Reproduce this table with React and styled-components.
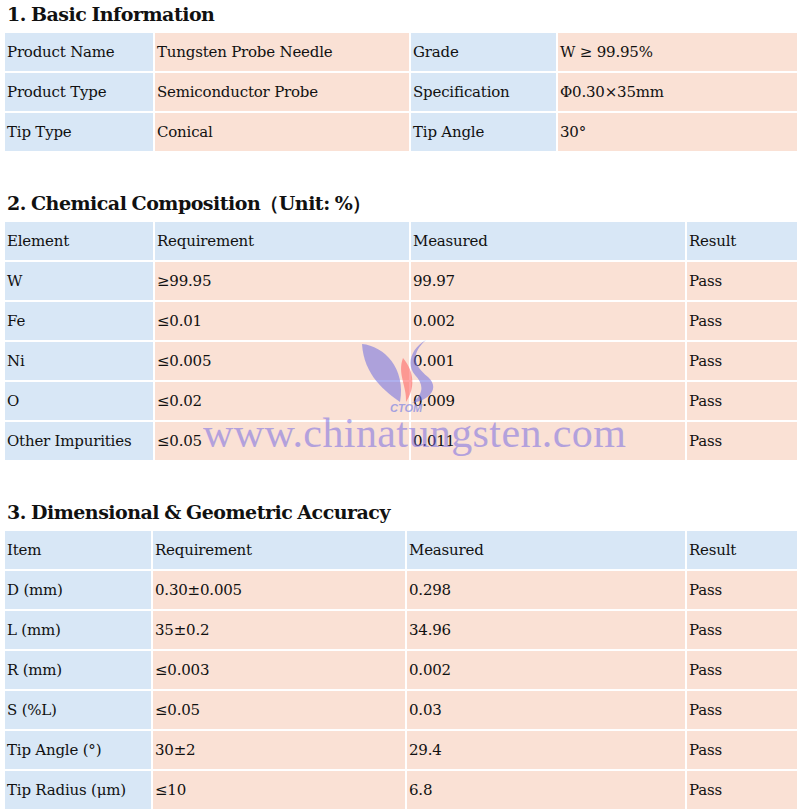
import styled, { createGlobalStyle } from "styled-components";

const GlobalStyle = createGlobalStyle`
  html, body { margin: 0; padding: 0; background: #fff; }
  body { font-family: "DejaVu Serif", "Liberation Serif", serif; color: #111; }
`;

const Page = styled.div`
  position: relative;
  width: 800px;
  padding: 0 1px 0 3px;
  box-sizing: border-box;
`;

const Heading = styled.h2`
  margin: ${(p) => (p.$first ? "0" : "36px")} 0 2px 4px;
  font-size: 19px;
  line-height: 29px;
  font-weight: bold;
  letter-spacing: -0.5px;
  word-spacing: -1px;
`;

const Table = styled.table`
  width: 796px;
  border-collapse: separate;
  border-spacing: 2px;
  table-layout: fixed;
`;

const Cell = styled.td`
  height: 38px;
  padding: 0 2px;
  box-sizing: border-box;
  font-size: 15px;
  letter-spacing: -0.2px;
  white-space: nowrap;
  vertical-align: middle;
  background: ${(p) => (p.$head ? "#d8e7f6" : "#fae1d5")};
`;

const Watermark = styled.div`
  position: absolute;
  left: 0;
  top: 0;
  width: 800px;
  height: 809px;
  pointer-events: none;
`;

const Logo = styled.svg`
  position: absolute;
  left: 356px;
  top: 334px;
`;

const Url = styled.div`
  position: absolute;
  left: 203px;
  top: 410px;
  font-family: "Liberation Serif", serif;
  font-size: 42px;
  line-height: 46px;
  color: #6f63e4;
  opacity: 0.5;
  letter-spacing: 0.4px;
`;

const basic = [
  ["Product Name", "Tungsten Probe Needle", "Grade", "W ≥ 99.95%"],
  ["Product Type", "Semiconductor Probe", "Specification", "Φ0.30×35mm"],
  ["Tip Type", "Conical", "Tip Angle", "30°"],
];

const chemical = [
  ["Element", "Requirement", "Measured", "Result"],
  ["W", "≥99.95", "99.97", "Pass"],
  ["Fe", "≤0.01", "0.002", "Pass"],
  ["Ni", "≤0.005", "0.001", "Pass"],
  ["O", "≤0.02", "0.009", "Pass"],
  ["Other Impurities", "≤0.05", "0.011", "Pass"],
];

const dimensional = [
  ["Item", "Requirement", "Measured", "Result"],
  ["D (mm)", "0.30±0.005", "0.298", "Pass"],
  ["L (mm)", "35±0.2", "34.96", "Pass"],
  ["R (mm)", "≤0.003", "0.002", "Pass"],
  ["S (%L)", "≤0.05", "0.03", "Pass"],
  ["Tip Angle (°)", "30±2", "29.4", "Pass"],
  ["Tip Radius (μm)", "≤10", "6.8", "Pass"],
];

function DataTable({ rows, widths, isHead }) {
  return (
    <Table>
      <colgroup>
        {widths.map((w, i) => (
          <col key={i} style={{ width: w }} />
        ))}
      </colgroup>
      <tbody>
        {rows.map((row, r) => (
          <tr key={r}>
            {row.map((text, c) => (
              <Cell key={c} $head={isHead(r, c)}>
                {text}
              </Cell>
            ))}
          </tr>
        ))}
      </tbody>
    </Table>
  );
}

export default function App() {
  return (
    <Page>
      <GlobalStyle />
      <Heading $first>1. Basic Information</Heading>
      <DataTable
        rows={basic}
        widths={[148, 254, 145, 239]}
        isHead={(r, c) => c === 0 || c === 2}
      />
      <Heading>2. Chemical Composition（Unit: %）</Heading>
      <DataTable
        rows={chemical}
        widths={[148, 254, 274, 110]}
        isHead={(r, c) => r === 0 || c === 0}
      />
      <Heading>3. Dimensional &amp; Geometric Accuracy</Heading>
      <DataTable
        rows={dimensional}
        widths={[146, 252, 278, 110]}
        isHead={(r, c) => r === 0 || c === 0}
      />
      <Watermark>
        <Logo width="100" height="82" viewBox="0 0 100 82">
          <g opacity="0.55">
            <path d="M6 10 C 28 12, 50 34, 44 68 C 30 58, 8 42, 6 10 Z" fill="#6f6ee0" />
            <path d="M70 6 C 54 20, 58 32, 72 43 C 84 54, 74 66, 56 69 C 68 60, 68 50, 59 41 C 50 31, 55 14, 70 6 Z" fill="#6f6ee0" />
            <path d="M47 24 C 41 40, 51 52, 50 68 C 59 55, 59 38, 47 24 Z" fill="#ff5d5d" />
            <text x="34" y="78" fontSize="11" fontStyle="italic" fontWeight="bold" fontFamily="Liberation Sans, sans-serif" fill="#5f6ee8">CTOM</text>
          </g>
        </Logo>
        <Url>www.chinatungsten.com</Url>
      </Watermark>
    </Page>
  );
}
